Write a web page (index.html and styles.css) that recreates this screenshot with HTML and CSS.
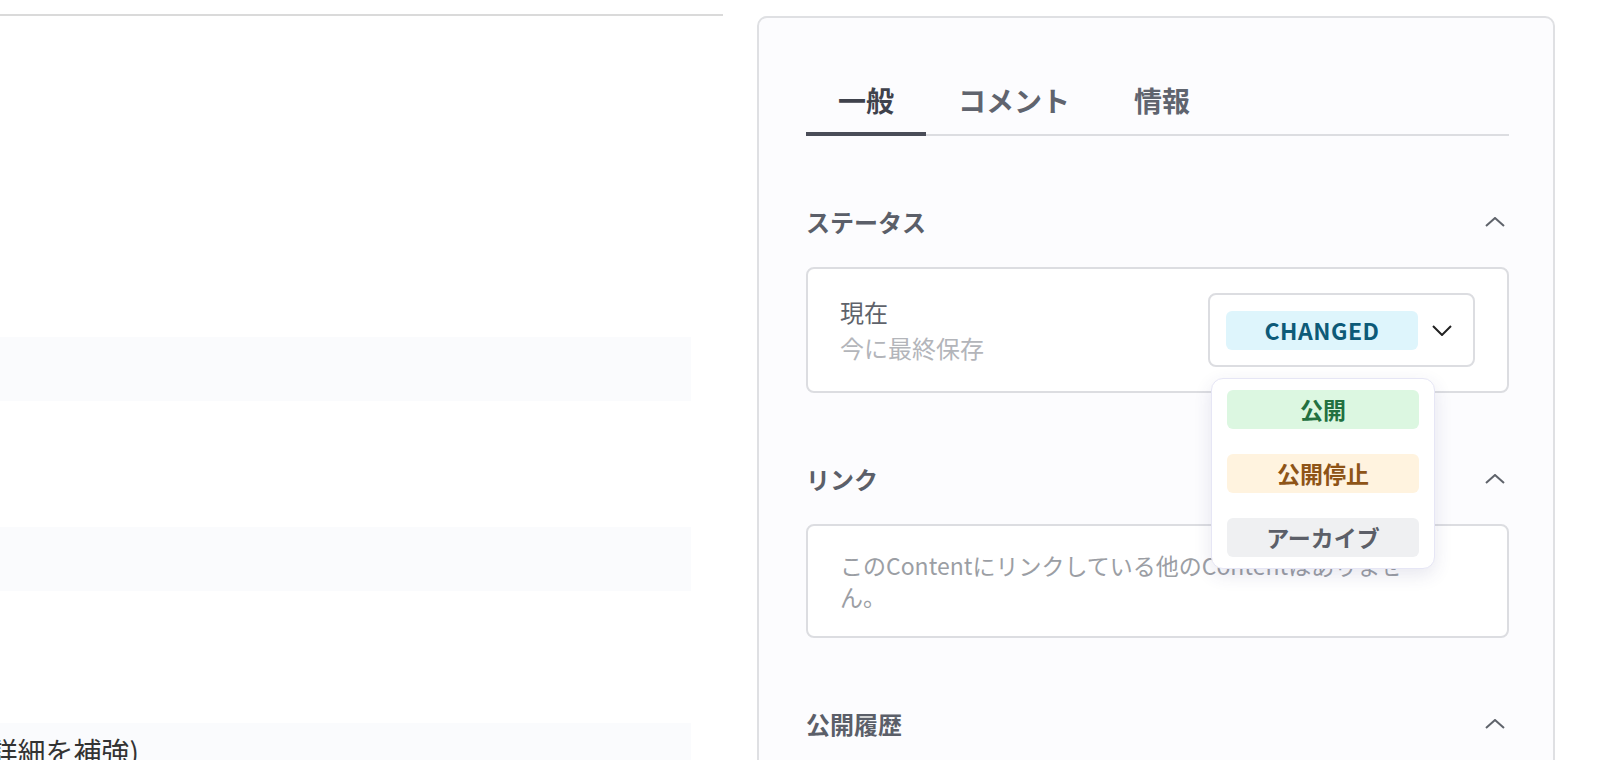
FILE: index.html
```html
<!DOCTYPE html>
<html lang="ja">
<head>
    <meta charset="UTF-8">
    <meta name="viewport" content="width=device-width, initial-scale=1.0">
    <link rel="stylesheet" href="styles.css">
    <title>Content 編集</title>
</head>
<body>
    <div class="layout">
        <main class="editor">
            <div class="field"></div>
            <div class="field"></div>
            <div class="field field-last">入力内容(詳細を補強)</div>
        </main>

        <aside class="sidebar">
            <nav class="tabs">
                <button class="tab active">一般</button>
                <button class="tab">コメント</button>
                <button class="tab">情報</button>
            </nav>

            <section class="section">
                <header class="section-head">
                    <h2>ステータス</h2>
                    <svg class="chevron-up" width="20" height="10" viewBox="0 0 20 10"><polyline points="1,9 10,1 19,9" /></svg>
                </header>
                <div class="card status-card">
                    <div class="status-info">
                        <div class="status-label">現在</div>
                        <div class="status-sub">今に最終保存</div>
                    </div>
                    <div class="status-select">
                        <span class="chip chip-changed">CHANGED</span>
                        <svg class="chevron-down" width="20" height="11" viewBox="0 0 20 11"><polyline points="1,1 10,10 19,1" /></svg>
                        <ul class="status-menu">
                            <li><span class="chip chip-published">公開</span></li>
                            <li><span class="chip chip-unpublished">公開停止</span></li>
                            <li><span class="chip chip-archived">アーカイブ</span></li>
                        </ul>
                    </div>
                </div>
            </section>

            <section class="section">
                <header class="section-head">
                    <h2>リンク</h2>
                    <svg class="chevron-up" width="20" height="10" viewBox="0 0 20 10"><polyline points="1,9 10,1 19,9" /></svg>
                </header>
                <div class="card link-card">
                    <p>このContentにリンクしている他のContentはありません。</p>
                </div>
            </section>

            <section class="section">
                <header class="section-head">
                    <h2>公開履歴</h2>
                    <svg class="chevron-up" width="20" height="10" viewBox="0 0 20 10"><polyline points="1,9 10,1 19,9" /></svg>
                </header>
            </section>
        </aside>
    </div>
</body>
</html>
```

FILE: styles.css
```css
body {
    margin: 0;
    font-family: "Noto Sans CJK JP", "Noto Sans", sans-serif;
    background-color: #fff;
    color: #333;
    overflow: hidden;
}

.layout {
    display: flex;
    align-items: flex-start;
}

/* 左側: 編集フォーム (左にはみ出している) */
.editor {
    flex: none;
    width: 839px;
    margin-left: -148px;
    margin-top: 14px;
    padding: 321px 32px 0 0;
    border-top: 2px solid #dadada;
}

.field {
    height: 64px;
    background-color: #fafbfd;
    padding: 10px 16px;
    box-sizing: border-box;
    font-size: 28px;
    line-height: 36px;
    color: #333;
    white-space: nowrap;
}

.field + .field {
    margin-top: 126px;
}

.field-last {
    margin-top: 132px !important;
}

/* 右側: サイドバー */
.sidebar {
    flex: none;
    width: 798px;
    min-height: 800px;
    box-sizing: border-box;
    margin-left: 34px;
    margin-top: 16px;
    padding: 46px 44px 0 47px;
    border: 2px solid #dfe0e3;
    border-radius: 10px;
    background-color: #fcfcfe;
}

.tabs {
    display: flex;
    border-bottom: 2px solid #dcdde1;
}

.tab {
    font-family: inherit;
    font-size: 28px;
    font-weight: bold;
    line-height: 40px;
    color: #60646e;
    background: none;
    border: none;
    border-bottom: 4px solid transparent;
    margin-bottom: -2px;
    padding: 16px 32px 12px;
    cursor: pointer;
}

.tab.active {
    color: #3f424c;
    border-bottom-color: #4a4d58;
}

.section {
    margin-top: 68px;
}

.section-head {
    display: flex;
    justify-content: space-between;
    align-items: center;
    height: 36px;
    margin-bottom: 27px;
}

.section-head h2 {
    margin: 0;
    font-size: 24px;
    line-height: 36px;
    font-weight: bold;
    color: #5b5f69;
}

.chevron-up {
    margin-right: 4px;
    fill: none;
    stroke: #5f636b;
    stroke-width: 2;
}

.card {
    background-color: #fff;
    border: 2px solid #dcdde1;
    border-radius: 8px;
    padding: 24px 32px;
}

.status-card {
    display: flex;
    justify-content: space-between;
    align-items: center;
}

.status-label {
    font-size: 24px;
    line-height: 36px;
    color: #5f636b;
}

.status-sub {
    font-size: 24px;
    line-height: 36px;
    color: #b3b5ba;
}

.status-select {
    position: relative;
    display: flex;
    align-items: center;
    gap: 14px;
    height: 70px;
    padding: 0 21px 0 16px;
    border: 2px solid #dcdde1;
    border-radius: 8px;
    background-color: #fff;
}

.chevron-down {
    fill: none;
    stroke: #222;
    stroke-width: 2;
}

.chip {
    display: block;
    width: 192px;
    height: 39px;
    line-height: 39px;
    border-radius: 6px;
    text-align: center;
    font-size: 23px;
    font-weight: bold;
}

.chip-changed {
    background-color: #def5fc;
    color: #0d5a78;
    letter-spacing: 0.5px;
}

.chip-published {
    background-color: #dcf7e1;
    color: #237040;
}

.chip-unpublished {
    background-color: #fff3df;
    color: #8e5417;
}

.chip-archived {
    background-color: #eff0f2;
    color: #5c5f68;
}

/* ステータスのドロップダウン */
.status-menu {
    position: absolute;
    top: 83px;
    left: 1px;
    z-index: 10;
    list-style: none;
    margin: 0;
    padding: 11px 15px;
    width: 192px;
    display: flex;
    flex-direction: column;
    gap: 25px;
    background-color: #fff;
    border: 1px solid #e6e6f5;
    border-radius: 12px;
    box-shadow: 0 6px 18px rgba(60, 60, 120, 0.12);
}

.link-card p {
    margin: 0;
    max-width: 585px;
    font-size: 23px;
    line-height: 31px;
    color: #9b9ea4;
}
```
